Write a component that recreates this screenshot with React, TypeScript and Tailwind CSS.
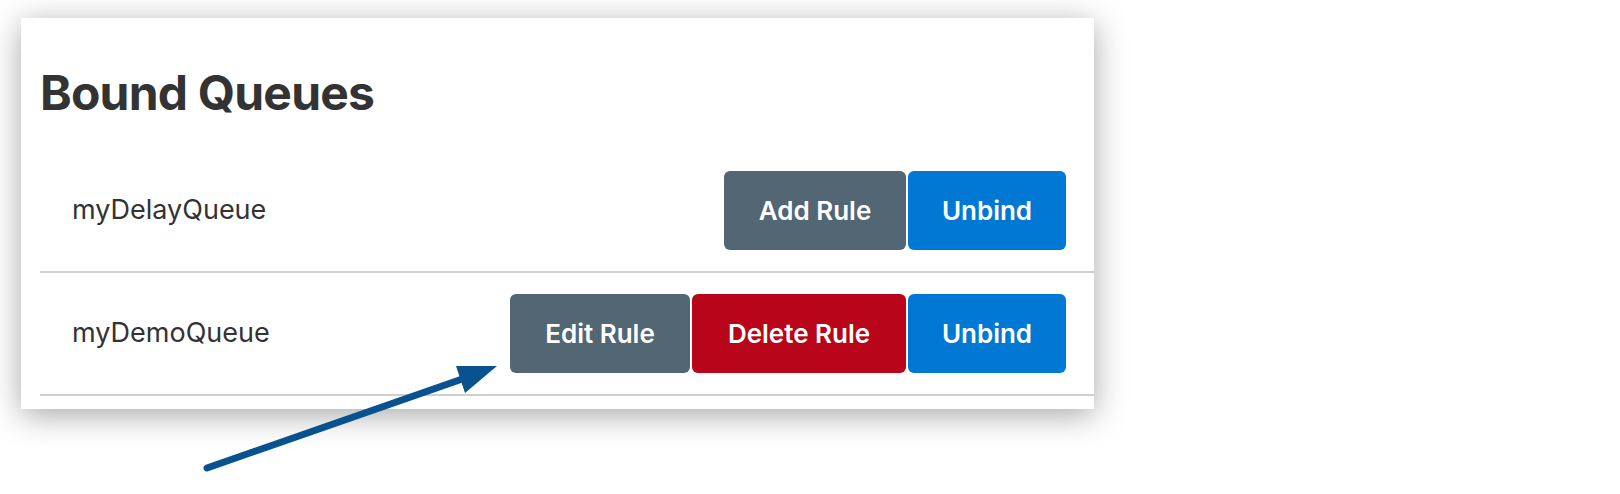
import React from 'react';

const font = { fontFamily: 'Inter, "Noto Sans", sans-serif' };

type Btn = { label: string; tone: 'slate' | 'red' | 'blue'; w: string };

const toneClass = {
    slate: 'bg-[#526773]',
    red: 'bg-[#b80519]',
    blue: 'bg-[#0078d4]',
};

const queues: { name: string; buttons: Btn[] }[] = [
    {
        name: 'myDelayQueue',
        buttons: [
            { label: 'Add Rule', tone: 'slate', w: 'w-[182px]' },
            { label: 'Unbind', tone: 'blue', w: 'w-[158px]' },
        ],
    },
    {
        name: 'myDemoQueue',
        buttons: [
            { label: 'Edit Rule', tone: 'slate', w: 'w-[180px]' },
            { label: 'Delete Rule', tone: 'red', w: 'w-[214px]' },
            { label: 'Unbind', tone: 'blue', w: 'w-[158px]' },
        ],
    },
];

// callout arrow drawn over the screenshot
const Arrow = () => (
    <svg className="pointer-events-none absolute left-0 top-0" width="1620" height="494" viewBox="0 0 1620 494" fill="none">
        <line x1="207" y1="468" x2="468" y2="377" stroke="#07528f" strokeWidth="7" strokeLinecap="round" />
        <polygon points="497,366 456,366 465,393" fill="#07528f" />
    </svg>
);

export default function App() {
    return (
        <div className="relative h-[494px] w-[1620px] overflow-hidden bg-white pl-[21px] pt-[18px]" style={font}>
            <div className="h-[391px] w-[1073px] overflow-hidden bg-white pl-[19px] pt-[51px] shadow-[0_6px_30px_rgba(0,0,0,0.35)]">
                <h2 className="text-[48px] font-bold leading-[48px] tracking-[-0.8px] text-[#333]">Bound Queues</h2>

                <ul className="mt-[33px]">
                    {queues.map(q => (
                        <li key={q.name} className="flex items-center justify-between border-b-2 border-[#cfcfcf] py-[21px] pl-[32px] pr-[28px]">
                            <span className="text-[27px] text-[#333]">{q.name}</span>
                            <div className="flex gap-[2px]">
                                {q.buttons.map(b => (
                                    <button key={b.label} type="button"
                                        className={`${toneClass[b.tone]} ${b.w} flex h-[79px] items-center justify-center rounded-[6px] text-[26px] font-semibold text-white`}>
                                        {b.label}
                                    </button>
                                ))}
                            </div>
                        </li>
                    ))}
                </ul>
            </div>
            <Arrow />
        </div>
    );
}
